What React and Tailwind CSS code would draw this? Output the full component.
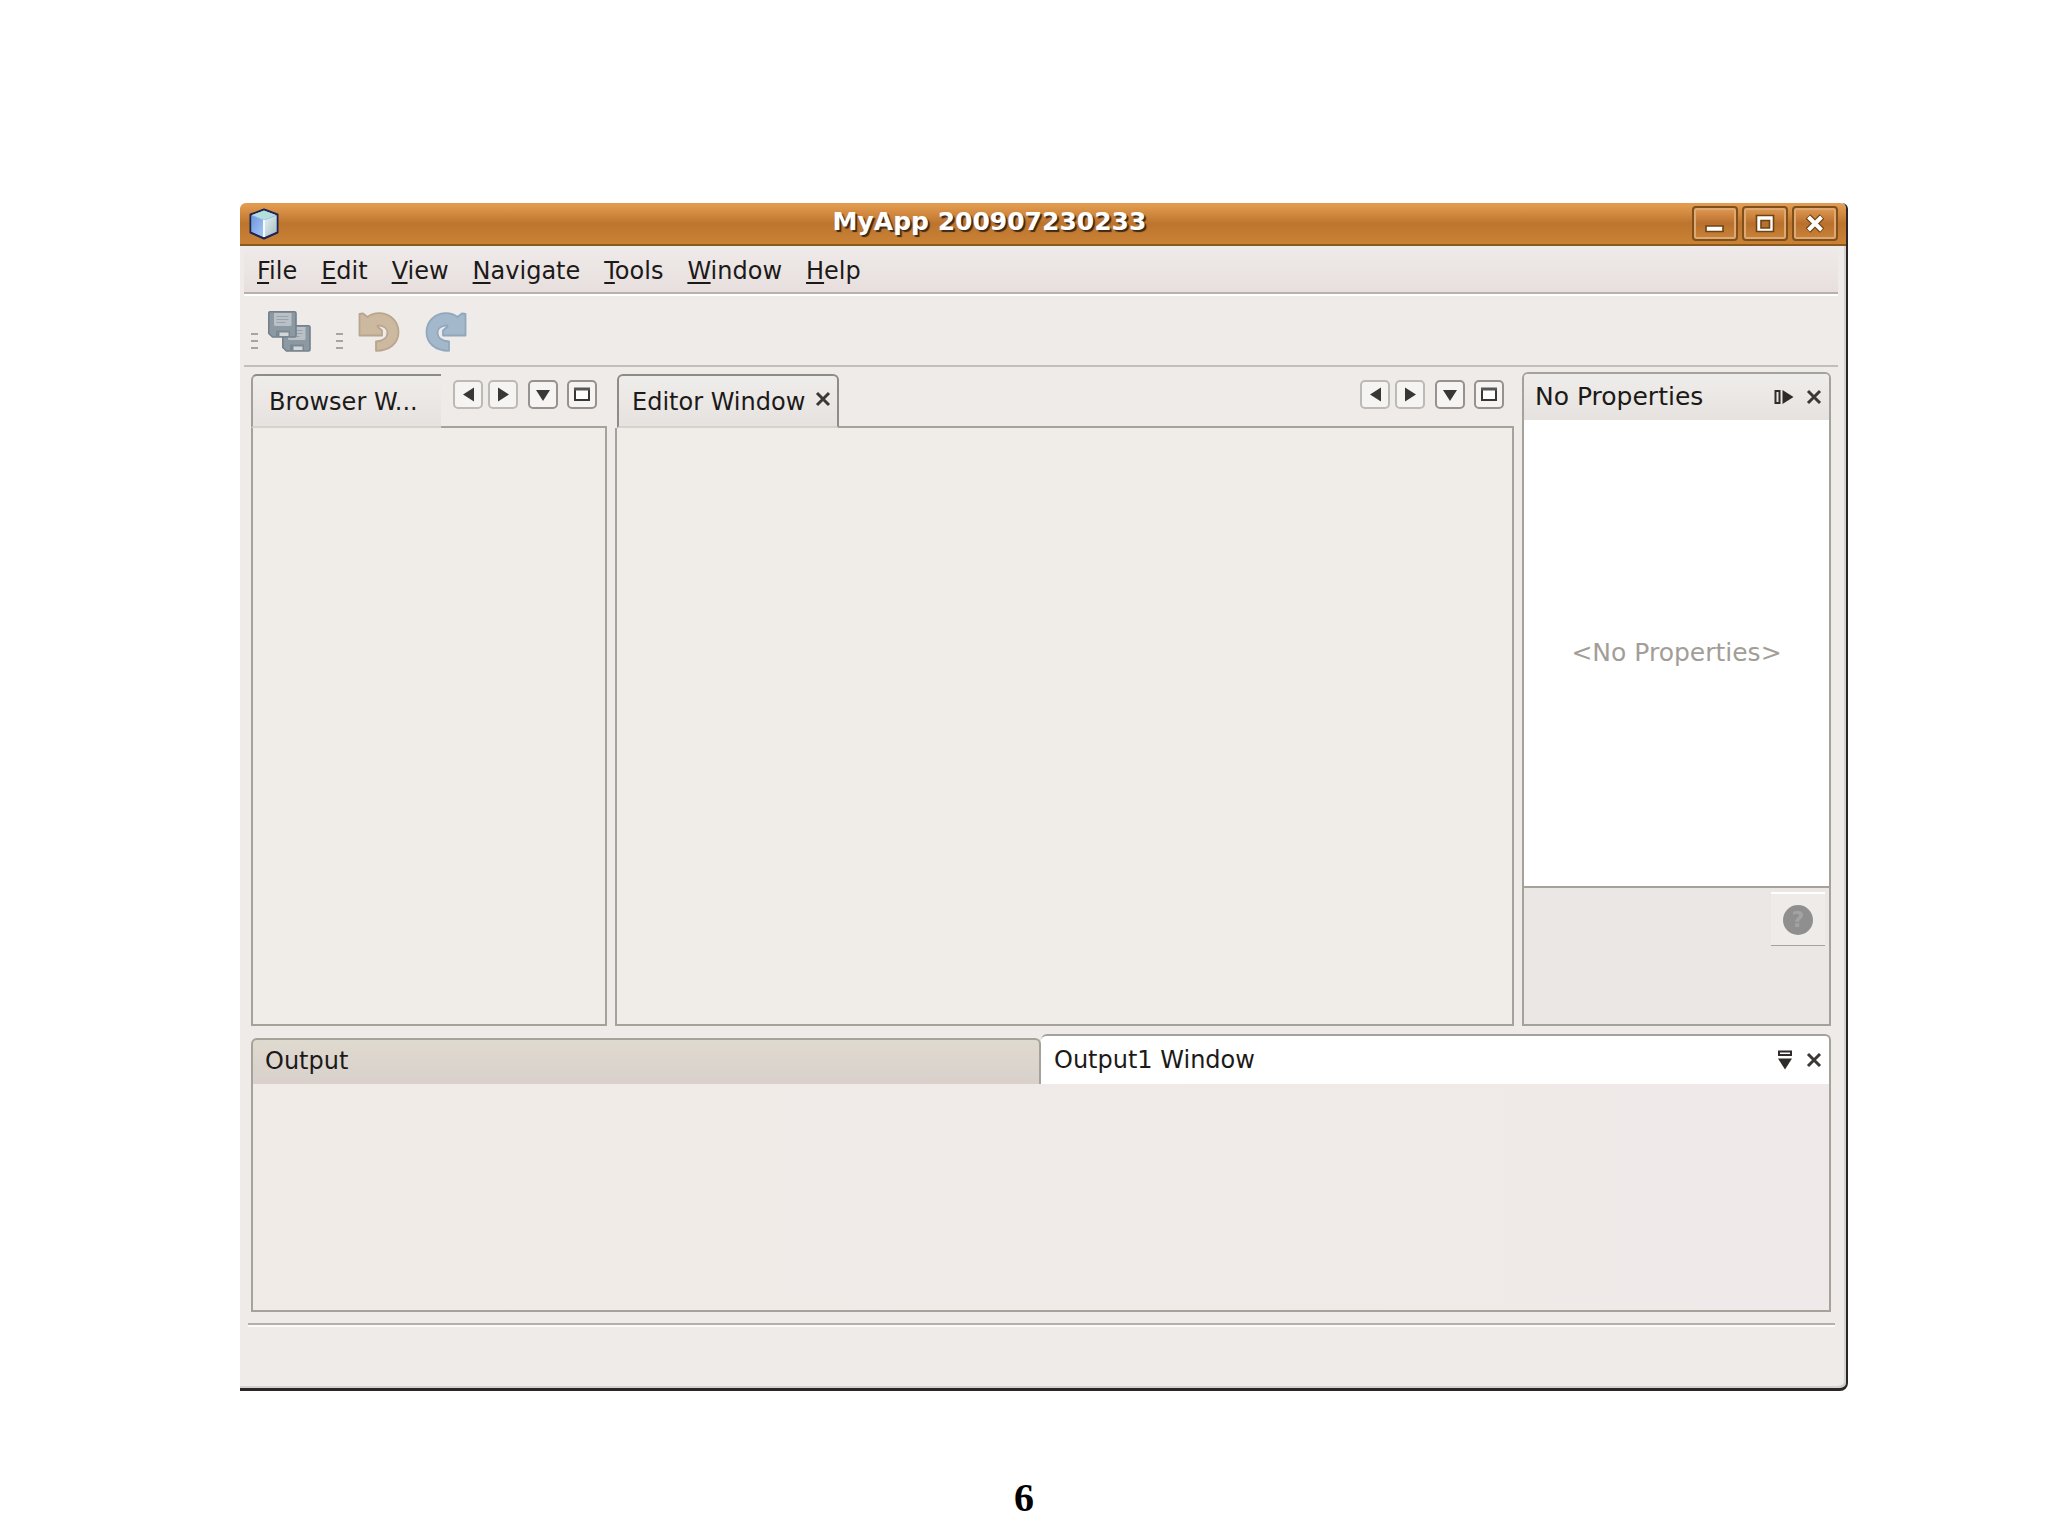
const MENU_ITEMS = ['File', 'Edit', 'View', 'Navigate', 'Tools', 'Window', 'Help'];

function CubeIcon() {
  return (
    <svg className="w-[30px] h-[32px]" viewBox="0 0 30 32">
      <defs>
        <linearGradient id="cubeLeft" x1="0" y1="0" x2="1" y2="1">
          <stop offset="0" stopColor="#6f97dc" />
          <stop offset="1" stopColor="#a9c8f6" />
        </linearGradient>
        <linearGradient id="cubeRight" x1="0" y1="0" x2="1" y2="1">
          <stop offset="0" stopColor="#e6f3f6" />
          <stop offset="1" stopColor="#a5bdbf" />
        </linearGradient>
      </defs>
      <path d="M15 1.500 28.500 6.500V24.500L15 30.500 1.500 24.500V6.500z" fill="#8fb0e0" stroke="#1d2352" strokeWidth="2" strokeLinejoin="round" />
      <path d="M15 2.500 27 7 15 12 3 7z" fill="#b2dedb" />
      <path d="M2.500 7.500 15 12.500V29L2.500 23.500z" fill="url(#cubeLeft)" />
      <path d="M15 12.500 27.500 7.500V23.500L15 29z" fill="url(#cubeRight)" />
      <path d="M15 12v17" stroke="#f2fbff" strokeWidth="2" />
    </svg>
  );
}

function Floppy({ x, y }) {
  return (
    <g transform={`translate(${x} ${y})`}>
      <path d="M2 .8H26.500Q28 .8 28 2.300V24.500Q28 26 26.500 26H4.500L.8 22.500V2Q.8 .8 2 .8z" fill="#8c99a3" stroke="#74818b" strokeWidth="1.600" />
      <path d="M6 2H23.500V13.500Q23.500 15 22 15H7.500Q6 15 6 13.500z" fill="#b9c1c6" />
      <path d="M8.500 5.500h12M8.500 8.500h12M8.500 11.500h9" stroke="#98a3ab" strokeWidth="1.200" />
      <path d="M8 19.500H22V25.500H8z" fill="#7b8892" />
      <path d="M11.500 21.500H20.500V25H11.500z" fill="#d2d6d8" />
    </g>
  );
}

function SaveAllIcon() {
  return (
    <svg className="w-11 h-[42px]" viewBox="0 0 44 42">
      <Floppy x={14} y={14} />
      <Floppy x={0} y={0} />
    </svg>
  );
}

function TurnIcon({ flipped, fill, stroke }) {
  return (
    <svg className={flipped ? 'w-[42px] h-10 -scale-x-100' : 'w-[42px] h-10'} viewBox="0 0 42 40">
      <path
        d="M1.500 2 5 1.500 9.500 5C13.500 1.800 18 1 22 1.200 32.500 1.700 40.500 9.500 40.500 20 40.500 31 32 38.800 18 38.800V29.500C25 29 29.500 25.500 29.500 20.500 29.500 16.500 25.500 13.300 19.500 13.300V14.500L24 18.500V23.500H1.500z"
        fill={fill}
        stroke={stroke}
        strokeWidth="1.800"
        strokeLinejoin="round"
      />
    </svg>
  );
}

function CrossIcon() {
  return (
    <svg className="w-4 h-4" viewBox="0 0 16 16">
      <path d="M2 2 14 14M14 2 2 14" stroke="#3c3836" strokeWidth="3" />
    </svg>
  );
}

function Gripper() {
  return (
    <div className="flex flex-col gap-[5px] pt-[18px]">
      <span className="w-[7px] h-[2px] bg-[#a9a4a0]" />
      <span className="w-[7px] h-[2px] bg-[#a9a4a0]" />
      <span className="w-[7px] h-[2px] bg-[#a9a4a0]" />
    </div>
  );
}

function TitleButton({ label, children }) {
  return (
    <button
      type="button"
      aria-label={label}
      className="w-[46px] h-[35px] rounded-sm border-2 border-[#80501c] bg-linear-to-b from-[#e09a50] via-[#b9702e] to-[#c98338] shadow-[inset_0_0_0_2px_#dfa873]"
    >
      <svg className="w-full h-full" viewBox="0 0 42 31">
        {children}
      </svg>
    </button>
  );
}

function ToolButton({ label, soft, children }) {
  return (
    <button
      type="button"
      aria-label={label}
      className={`w-[30px] h-[29px] rounded-[5px] border-2 bg-[#f6f4f2] ${soft ? 'border-[#bdb9b5]' : 'border-[#97928e]'}`}
    >
      <svg className="w-full h-full" viewBox="0 0 26 25">
        {children}
      </svg>
    </button>
  );
}

function TabControls() {
  return (
    <div className="flex pr-[10px] pt-[6px] shrink-0">
      <div className="flex gap-[5px]">
        <ToolButton label="Scroll left" soft>
          <path d="M19 5.500V19.500L8 12.500z" fill="#3a3634" />
        </ToolButton>
        <ToolButton label="Scroll right" soft>
          <path d="M8 5.500V19.500L19 12.500z" fill="#3a3634" />
        </ToolButton>
      </div>
      <div className="flex gap-[9px] pl-[10px]">
        <ToolButton label="Show documents">
          <path d="M6 8H20L13 19z" fill="#3a3634" />
        </ToolButton>
        <ToolButton label="Maximize">
          <path d="M6 7H20V18H6z" fill="#fff" stroke="#3a3634" strokeWidth="2" />
          <path d="M5 7H21" stroke="#5a5654" strokeWidth="3" />
        </ToolButton>
      </div>
    </div>
  );
}

function TitleBar() {
  return (
    <header className="flex items-center h-[43px] pl-[9px] pr-2 rounded-t-md border-b-2 border-[#8a5a1c] bg-linear-to-b from-[#e39b4f] from-5% via-[#bd752e] via-50% to-[#c98235]">
      <CubeIcon />
      <h1 className="flex-1 pl-2 text-center text-[25px] leading-8 font-bold text-white [text-shadow:2px_2px_1px_#3b2a18] -mt-[3px]">
        MyApp 200907230233
      </h1>
      <div className="flex gap-[4px] -mt-px">
        <TitleButton label="Minimize">
          <path d="M12 18H29V23.500H12z" fill="#fff" stroke="#6d4314" strokeWidth="1.600" />
        </TitleButton>
        <TitleButton label="Maximize">
          <path d="M12.500 7.500H29.500V23.500H12.500z" fill="#fff" stroke="#6d4314" strokeWidth="1.600" />
          <path d="M17 12.500H25.500V20H17z" fill="#b5712e" stroke="#6d4314" strokeWidth="1.600" />
        </TitleButton>
        <TitleButton label="Close">
          <path d="M14 8.500 28 22.500M28 8.500 14 22.500" stroke="#6d4314" strokeWidth="6.500" />
          <path d="M14.500 9 27.500 22M27.500 9 14.500 22" stroke="#fff" strokeWidth="4" />
        </TitleButton>
      </div>
    </header>
  );
}

function MenuBar() {
  return (
    <nav className="ml-1 mr-2 flex items-start gap-6 h-12 pl-[13px] pt-[9px] border-b-2 border-[#b8b0ad] bg-linear-to-b from-[#efebea] to-[#e7dfdd]">
      {MENU_ITEMS.map((item) => (
        <button key={item} type="button" className="leading-8">
          <span className="underline decoration-2 underline-offset-[3px]">{item[0]}</span>
          {item.slice(1)}
        </button>
      ))}
    </nav>
  );
}

function Toolbar() {
  return (
    <div className="ml-1 mr-2 flex items-center h-[73px] pl-[7px] pt-[3px] border-t-2 border-t-white border-b-2 border-b-[#c3bebb]">
      <Gripper />
      <button type="button" aria-label="Save all" className="ml-[10px]">
        <SaveAllIcon />
      </button>
      <div className="w-6" />
      <Gripper />
      <button type="button" aria-label="Undo" className="ml-[15px]">
        <TurnIcon fill="#cdb99f" stroke="#b9a68f" />
      </button>
      <button type="button" aria-label="Redo" className="ml-[25px]">
        <TurnIcon flipped fill="#a3b9cb" stroke="#8fa8bd" />
      </button>
    </div>
  );
}

function BrowserPane() {
  return (
    <section className="flex flex-col pt-[2px]">
      <div className="flex h-[54px]">
        <div className="flex-1 pl-4 pt-[10px] border-t-2 border-l-2 border-t-[#8f8b88] border-l-[#a29e98] border-b-2 border-b-[#d6d3cf] rounded-tl-md bg-linear-to-b from-[#efedeb] to-[#e6e2df]">
          <h2 className="leading-8 whitespace-nowrap">Browser W...</h2>
        </div>
        <div className="pl-3 border-b-2 border-[#a5a19b]">
          <TabControls />
        </div>
      </div>
      <div className="flex-1 border-2 border-t-0 border-[#a5a19b] bg-[#f0ede8]" />
    </section>
  );
}

function EditorPane() {
  return (
    <section className="flex flex-col pt-[2px]">
      <div className="flex h-[54px] pl-[2px]">
        <div className="flex items-start pl-[13px] pr-[6px] pt-[10px] border-2 border-[#8f8b88] border-b-[#d6d3cf] rounded-t-md bg-linear-to-b from-[#efedeb] to-[#e6e2df]">
          <h2 className="leading-8 whitespace-nowrap">Editor Window</h2>
          <button type="button" aria-label="Close Editor Window" className="pl-[10px] pt-[5px]">
            <CrossIcon />
          </button>
        </div>
        <div className="flex-1 flex justify-end border-b-2 border-[#a5a19b]">
          <TabControls />
        </div>
      </div>
      <div className="flex-1 border-2 border-t-0 border-[#a5a19b] bg-[#f0ede8]" />
    </section>
  );
}

function PropertiesPane() {
  return (
    <section className="flex flex-col border-2 border-[#a5a19b] rounded-t-md bg-[#ebe7e4]">
      <div className="flex items-center h-[46px] pl-[11px] pr-[7px] rounded-t-sm bg-linear-to-b from-[#efedeb] to-[#e6e2df]">
        <h2 className="flex-1 text-[25px] leading-8">No Properties</h2>
        <button type="button" aria-label="Slide out">
          <svg className="w-5 h-4" viewBox="0 0 20 16">
            <path d="M1.500 2H5.500V14H1.500z" fill="none" stroke="#2f2b2a" strokeWidth="2" />
            <path d="M8.500 1V15L19.500 8z" fill="#2f2b2a" />
          </svg>
        </button>
        <button type="button" aria-label="Close properties" className="ml-3">
          <CrossIcon />
        </button>
      </div>
      <div className="flex-1 flex items-center justify-center bg-white">
        <p className="text-[25px] leading-8 text-[#a29e97]">&lt;No Properties&gt;</p>
      </div>
      <div className="flex justify-end items-start h-[138px] pt-[4px] pr-[4px] border-t-2 border-[#a5a19b]">
        <button
          type="button"
          aria-label="Help"
          className="flex items-center justify-center w-[54px] h-[54px] border-t-2 border-b border-t-white border-b-[#a5a19b] bg-[#efebe8]"
        >
          <span className="w-[30px] h-[30px] rounded-full bg-[#8f8f8f] text-[#a3a3a3] text-[22px] leading-[30px] font-bold">?</span>
        </button>
      </div>
    </section>
  );
}

function OutputPane() {
  return (
    <section className="flex flex-col h-[278px] mt-2 ml-[11px] mr-[15px]">
      <div className="grid grid-cols-[790fr_790fr] items-end h-[50px]">
        <div className="flex items-center h-[46px] pl-3 pb-[2px] border-t-2 border-l-2 border-r-2 border-[#a5a19b] rounded-t-md bg-linear-to-b from-[#dfdad0] to-[#d9d0cb]">
          <h2 className="leading-8">Output</h2>
        </div>
        <div className="flex items-center h-[50px] pl-[13px] pr-[7px] border-t-2 border-r-2 border-[#a5a19b] rounded-t-md bg-white">
          <h2 className="flex-1 leading-8">Output1 Window</h2>
          <button type="button" aria-label="Slide down">
            <svg className="w-4 h-5" viewBox="0 0 16 20">
              <path d="M2 1.500H14V5H2z" fill="none" stroke="#2f2b2a" strokeWidth="2" />
              <path d="M1 8.500H15L8 19.500z" fill="#2f2b2a" />
            </svg>
          </button>
          <button type="button" aria-label="Close Output1 Window" className="ml-[13px]">
            <CrossIcon />
          </button>
        </div>
      </div>
      <div className="flex-1 border-2 border-t-0 border-[#a5a19b] bg-linear-to-r from-[#f0ebe6] to-[#efeae9]" />
    </section>
  );
}

export default function App() {
  return (
    <div className="min-h-screen flex flex-col bg-white text-[24px] text-[#1c1a19] font-['DejaVu_Sans',sans-serif]">
      <main className="flex-1 flex flex-col pl-[240px] pr-[200px] pt-[203px]">
        <div className="flex-1 flex flex-col rounded-t-md rounded-br-lg border-r-2 border-b-3 border-[#2a2628] bg-[#efebe8] shadow-[inset_-2px_-2px_0_#d6d1d1]">
          <TitleBar />
          <MenuBar />
          <Toolbar />
          <div className="flex-1 grid grid-cols-[356fr_899fr_309fr] gap-2 pt-[5px] pl-[11px] pr-[15px]">
            <BrowserPane />
            <EditorPane />
            <PropertiesPane />
          </div>
          <OutputPane />
          <div className="h-[65px] mt-[11px] ml-2 mr-[11px] border-t-2 border-[#b5b0ac]">
            <div className="h-[2px] bg-[#fcfbf8]" />
          </div>
        </div>
      </main>
      <footer className="h-36 pt-[83px] text-center text-[40px] leading-[48px] font-bold text-black font-['Liberation_Serif',serif]">
        6
      </footer>
    </div>
  );
}
